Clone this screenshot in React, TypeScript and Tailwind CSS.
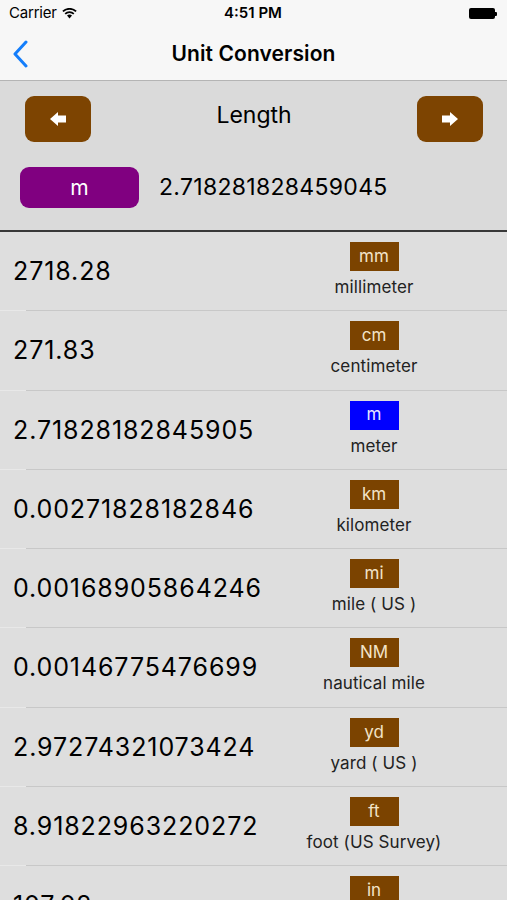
import React from "react";

const rows = [
  { value: "2718.28", unit: "mm", name: "millimeter" },
  { value: "271.83", unit: "cm", name: "centimeter" },
  { value: "2.71828182845905", unit: "m", name: "meter", active: true },
  { value: "0.00271828182846", unit: "km", name: "kilometer" },
  { value: "0.00168905864246", unit: "mi", name: "mile ( US )" },
  { value: "0.00146775476699", unit: "NM", name: "nautical mile" },
  { value: "2.97274321073424", unit: "yd", name: "yard ( US )" },
  { value: "8.91822963220272", unit: "ft", name: "foot (US Survey)" },
  { value: "107.02", unit: "in", name: "inch" },
];

const ArrowLeft = () => (
  <svg width="18" height="16" viewBox="0 0 18 16">
    <path d="M1 8 L9 1 L9 4.5 L17 4.5 L17 11.5 L9 11.5 L9 15 Z" fill="#fff" />
  </svg>
);

const ArrowRight = () => (
  <svg width="18" height="16" viewBox="0 0 18 16">
    <path d="M17 8 L9 1 L9 4.5 L1 4.5 L1 11.5 L9 11.5 L9 15 Z" fill="#fff" />
  </svg>
);

const App = () => {
  return (
    <div
      className="w-[507px] h-[900px] overflow-hidden bg-[#dedede] text-black"
      style={{ fontFamily: "Inter, 'Liberation Sans', sans-serif" }}
    >
      {/* status bar */}
      <div className="h-[27px] bg-[#f7f7f7] flex items-center px-[9px] text-[15px]">
        <div className="flex-1 flex items-center gap-[5px]">
          <span className="tracking-[-0.2px]">Carrier</span>
          <svg width="15" height="11" viewBox="0 0 15 11">
            <path d="M7.5 10.5 L10 7.6 A4 4 0 0 0 5 7.6 Z" fill="#000" />
            <path d="M2.6 5.2 A7 7 0 0 1 12.4 5.2 L11.2 6.5 A5.3 5.3 0 0 0 3.8 6.5 Z" fill="#000" />
            <path d="M0.3 2.8 A10.4 10.4 0 0 1 14.7 2.8 L13.5 4.1 A8.7 8.7 0 0 0 1.5 4.1 Z" fill="#000" />
          </svg>
        </div>
        <div className="font-semibold text-[15px]">4:51 PM</div>
        <div className="flex-1 flex justify-end pr-[1px]">
          <div className="flex items-center">
            <div className="w-[26px] h-[11px] rounded-[2px] bg-black" />
            <div className="w-[2px] h-[4px] bg-black rounded-r-[1px]" />
          </div>
        </div>
      </div>

      {/* nav bar */}
      <div className="h-[54px] bg-[#f7f7f7] border-b border-[#b4b4b4] flex items-center relative">
        <svg className="absolute left-[12px] top-[13px]" width="16" height="28" viewBox="0 0 16 28">
          <path d="M14 2 L3 14 L14 26" stroke="#147efb" strokeWidth="3" fill="none" strokeLinecap="round" strokeLinejoin="round" />
        </svg>
        <div className="w-full text-center font-semibold text-[21px] tracking-[0.1px]">Unit Conversion</div>
      </div>

      {/* header panel */}
      <div className="h-[151px] bg-[#dadada] border-b-2 border-[#383838] px-[20px] pt-[15px]">
        <div className="flex items-center justify-between pl-[5px] pr-[4px]">
          <button className="w-[66px] h-[46px] rounded-[9px] bg-[#7d4401] flex items-center justify-center">
            <ArrowLeft />
          </button>
          <div className="text-[23px] -mt-[8px]">Length</div>
          <button className="w-[66px] h-[46px] rounded-[9px] bg-[#7d4401] flex items-center justify-center">
            <ArrowRight />
          </button>
        </div>
        <div className="flex items-center mt-[25px]">
          <div className="w-[119px] h-[41px] rounded-[9px] bg-[#800080] flex items-center justify-center text-white text-[21px]">
            m
          </div>
          <div className="ml-[20px] text-[23px] tracking-[0.3px]">2.718281828459045</div>
        </div>
      </div>

      {/* rows */}
      <div>
        {rows.map((r) => (
          <div key={r.unit}>
            <div className="h-[78.3px] flex items-start">
              <div className="flex-1 pl-[13px] pt-[21px] text-[25px] tracking-[0.9px]">{r.value}</div>
              <div className="w-[218px] mr-[24px] flex flex-col items-center pt-[10px]">
                <div
                  className={
                    "w-[49px] h-[29px] flex items-center justify-center text-[17px] " +
                    (r.active ? "bg-[#0000ff] text-[#e8e8ff]" : "bg-[#7b4300] text-[#f3e3c8]")
                  }
                >
                  {r.unit}
                </div>
                <div className="mt-[4px] text-[17px] tracking-[0.1px] text-[#222]">{r.name}</div>
              </div>
            </div>
            <div className="h-px flex">
              <div className="w-[26px] bg-[#e8e8e8]" />
              <div className="flex-1 bg-[#c8c8c8]" />
            </div>
          </div>
        ))}
      </div>
    </div>
  );
};

export default App;
